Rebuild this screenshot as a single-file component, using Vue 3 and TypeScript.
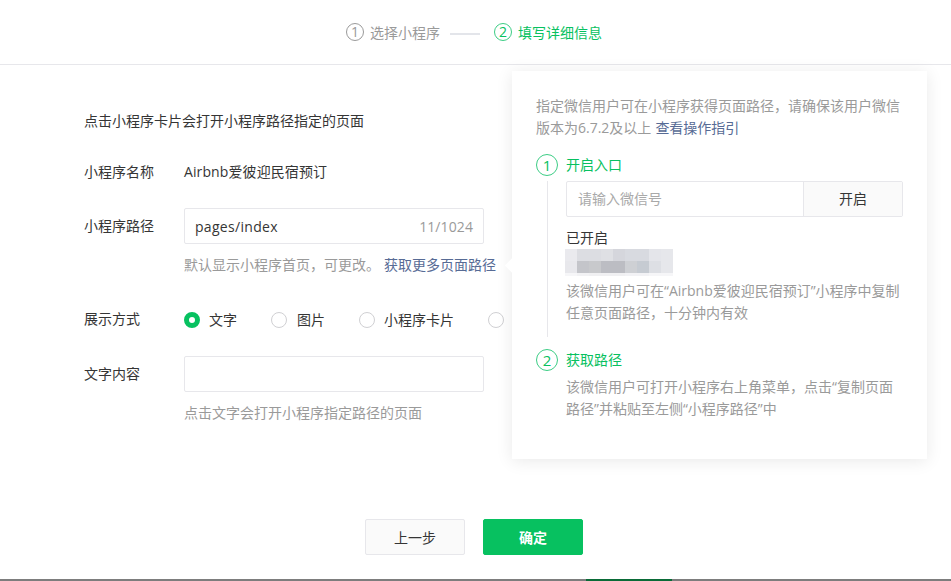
<script setup lang="ts">
const mosaic: string[] = [
  '#eaeaee','#dcdde2','#dcdde2','#dfe0e4','#d5d6dc','#d8dae0','#d8dae0','#e4e5ea','#e6e7eb',
  '#e8e8ec','#c4c5ca','#c8c9cc','#bcbdc3','#bcbdc3','#ced0d4','#c6cbd2','#dddfe4','#e6e7eb',
  '#f6f6f8','#f2f2f4','#f0f0f2','#f0f0f2','#f0f0f2','#f2f2f5','#f2f2f5','#f6f6f8','#f6f6f8',
]
</script>

<template>
  <div class="page">
    <header class="steps">
      <div class="step">
        <span class="num">1</span>
        <span>选择小程序</span>
      </div>
      <i class="step-line"></i>
      <div class="step active">
        <span class="num">2</span>
        <span>填写详细信息</span>
      </div>
    </header>

    <main class="content">
      <p class="intro">点击小程序卡片会打开小程序路径指定的页面</p>

      <div class="row row-name">
        <label class="label">小程序名称</label>
        <span class="value">Airbnb爱彼迎民宿预订</span>
      </div>

      <div class="row row-path">
        <label class="label">小程序路径</label>
        <div class="field">
          <div class="input">
            <span class="input-text">pages/index</span>
            <span class="counter">11/1024</span>
          </div>
          <p class="hint">默认显示小程序首页，可更改。<a class="link">获取更多页面路径</a></p>
        </div>
      </div>

      <div class="row row-radio">
        <label class="label">展示方式</label>
        <div class="radios">
          <span class="radio checked"><i class="dot"></i>文字</span>
          <span class="radio"><i class="dot"></i>图片</span>
          <span class="radio"><i class="dot"></i>小程序卡片</span>
          <span class="radio"><i class="dot"></i></span>
        </div>
      </div>

      <div class="row row-text">
        <label class="label">文字内容</label>
        <div class="field">
          <div class="input"></div>
          <p class="hint">点击文字会打开小程序指定路径的页面</p>
        </div>
      </div>

      <footer class="actions">
        <button class="btn">上一步</button>
        <button class="btn primary">确定</button>
      </footer>
    </main>

    <aside class="pop">
      <i class="arrow"></i>
      <p class="desc">指定微信用户可在小程序获得页面路径，请确保该用户微信版本为6.7.2及以上<a class="link guide">查看操作指引</a></p>

      <section class="sec first">
        <h4 class="sec-title"><span class="num">1</span><span class="sec-name">开启入口</span></h4>
        <div class="sec-body">
          <div class="combo">
            <span class="combo-input">请输入微信号</span>
            <span class="combo-btn">开启</span>
          </div>
          <p class="opened">已开启</p>
          <div class="mosaic">
            <i v-for="(c, i) in mosaic" :key="i" :style="{ background: c }"></i>
          </div>
          <p class="desc sub">该微信用户可在“Airbnb爱彼迎民宿预订”小程序中复制任意页面路径，十分钟内有效</p>
        </div>
      </section>

      <section class="sec">
        <h4 class="sec-title"><span class="num">2</span><span class="sec-name">获取路径</span></h4>
        <div class="sec-body plain">
          <p class="desc sub">该微信用户可打开小程序右上角菜单，点击“复制页面路径”并粘贴至左侧“小程序路径”中</p>
        </div>
      </section>
    </aside>

    <div class="taskbar"><i></i></div>
  </div>
</template>

<style scoped>
.page {
  position: relative;
  width: 951px;
  height: 581px;
  overflow: hidden;
  background: #fff;
  color: #353535;
  font-family: "Open Sans", "Noto Sans CJK SC", sans-serif;
  font-size: 14px;
}
p, h4 { margin: 0; font-weight: 400; }
a { color: #576b95; }

.steps {
  height: 64px;
  border-bottom: 1px solid #e7e7eb;
  display: flex;
  align-items: center;
  padding-left: 346px;
  color: #9a9a9a;
}
.step { display: flex; align-items: center; gap: 6px; }
.step.active { color: #07c160; }
.num {
  box-sizing: border-box;
  width: 18px;
  height: 18px;
  border: 1px solid currentColor;
  border-radius: 50%;
  display: inline-flex;
  align-items: center;
  justify-content: center;
  font-size: 14px;
  line-height: 1;
  flex: none;
}
.step.active .num { border-color: #3ccd85; }
.step-line {
  width: 30px;
  height: 2px;
  margin: 3px 14px 0 10px;
  background: #e3e5ea;
}

.content { padding: 46px 0 0 84px; }
.intro { line-height: 20px; }
.row { display: flex; }
.label { width: 100px; flex: none; }
.row-name { margin-top: 31px; line-height: 20px; }
.value { letter-spacing: 0.1px; }
.row-path { margin-top: 26px; }
.row-path .label, .row-text .label { line-height: 36px; }
.input {
  box-sizing: border-box;
  width: 300px;
  height: 36px;
  border: 1px solid #e7e7eb;
  border-radius: 2px;
  padding: 0 10px;
  display: flex;
  align-items: center;
  justify-content: space-between;
}
.input-text { letter-spacing: 0.3px; }
.counter { color: #9a9a9a; letter-spacing: 0.1px; }
.hint { margin-top: 11px; line-height: 20px; color: #9a9a9a; white-space: nowrap; }
.link { margin-left: 4px; }
.row-radio { margin-top: 35px; line-height: 20px; }
.row-radio .label { margin-top: -1px; }
.radios { display: flex; }
.radio { display: flex; align-items: center; gap: 9px; margin-right: 34px; }
.radio:nth-child(2) { gap: 10px; }
.dot {
  box-sizing: border-box;
  width: 16px;
  height: 16px;
  border: 1px solid #d0d0d3;
  border-radius: 50%;
}
.radio.checked .dot { border: 5px solid #07c160; background: #fff; }
.row-text { margin-top: 26px; }

.actions {
  position: absolute;
  left: 365px;
  top: 519px;
  display: flex;
  gap: 18px;
}
.btn {
  box-sizing: border-box;
  width: 100px;
  height: 36px;
  border: 1px solid #e7e7eb;
  border-radius: 2px;
  background: #fafafa;
  color: #353535;
  font: inherit;
  padding: 0;
}
.btn.primary {
  background: #07c160;
  border-color: #07c160;
  color: #fff;
  font-weight: 700;
}

.pop {
  box-sizing: border-box;
  position: absolute;
  left: 512px;
  top: 71px;
  width: 415px;
  height: 388px;
  padding: 24px 24px 0;
  background: #fff;
  box-shadow: 0 2px 16px rgba(0, 0, 0, 0.09);
  font-size: 14px;
}
.arrow {
  position: absolute;
  left: -5px;
  top: 189px;
  width: 11px;
  height: 11px;
  background: #fff;
  transform: rotate(45deg);
}
.desc { position: relative; line-height: 22px; color: #9a9a9a; }
.sec { position: relative; }
.sec.first { margin-top: 15px; }
.sec-title {
  display: flex;
  align-items: center;
  gap: 8px;
  height: 22px;
  color: #07c160;
  font-size: 14px;
}
.sec-name { line-height: 20px; margin-top: -1px; }
.sec-title .num { width: 22px; height: 22px; font-size: 15px; border-color: #3ccd85; }
.sec-body { margin: 5px 0 0 11px; padding: 0 0 13px 18px; border-left: 1px solid #e7e7eb; }
.sec-body.plain { border-left: 0; margin-top: 5px; padding-bottom: 0; padding-left: 19px; }
.combo {
  box-sizing: border-box;
  width: 337px;
  height: 36px;
  border: 1px solid #e7e7eb;
  border-radius: 2px;
  display: flex;
  line-height: 34px;
}
.combo-input { flex: 1; padding-left: 11px; color: #a9a9a9; }
.combo-btn { box-sizing: border-box; width: 99px; text-align: center; background: #fafafa; border-left: 1px solid #e7e7eb; color: #353535; }
.opened { margin-top: 11px; line-height: 20px; color: #353535; }
.mosaic {
  display: grid;
  grid-template-columns: repeat(9, 12px);
  grid-template-rows: 12px 12px 3px;
  width: 108px;
  margin-top: 1px;
  margin-left: -1px;
  filter: blur(0.6px);
}
.mosaic i { display: block; }
.sub { margin-top: 4px; }
.sec + .sec { margin-top: 12px; }
.plain .sub { margin-top: 0; }

.taskbar {
  position: absolute;
  left: 0;
  right: 0;
  bottom: 0;
  height: 2px;
  background: #7d7d7d;
}
.taskbar i {
  position: absolute;
  left: 586px;
  top: 0;
  width: 86px;
  height: 2px;
  background: #0a6b37;
}
</style>
